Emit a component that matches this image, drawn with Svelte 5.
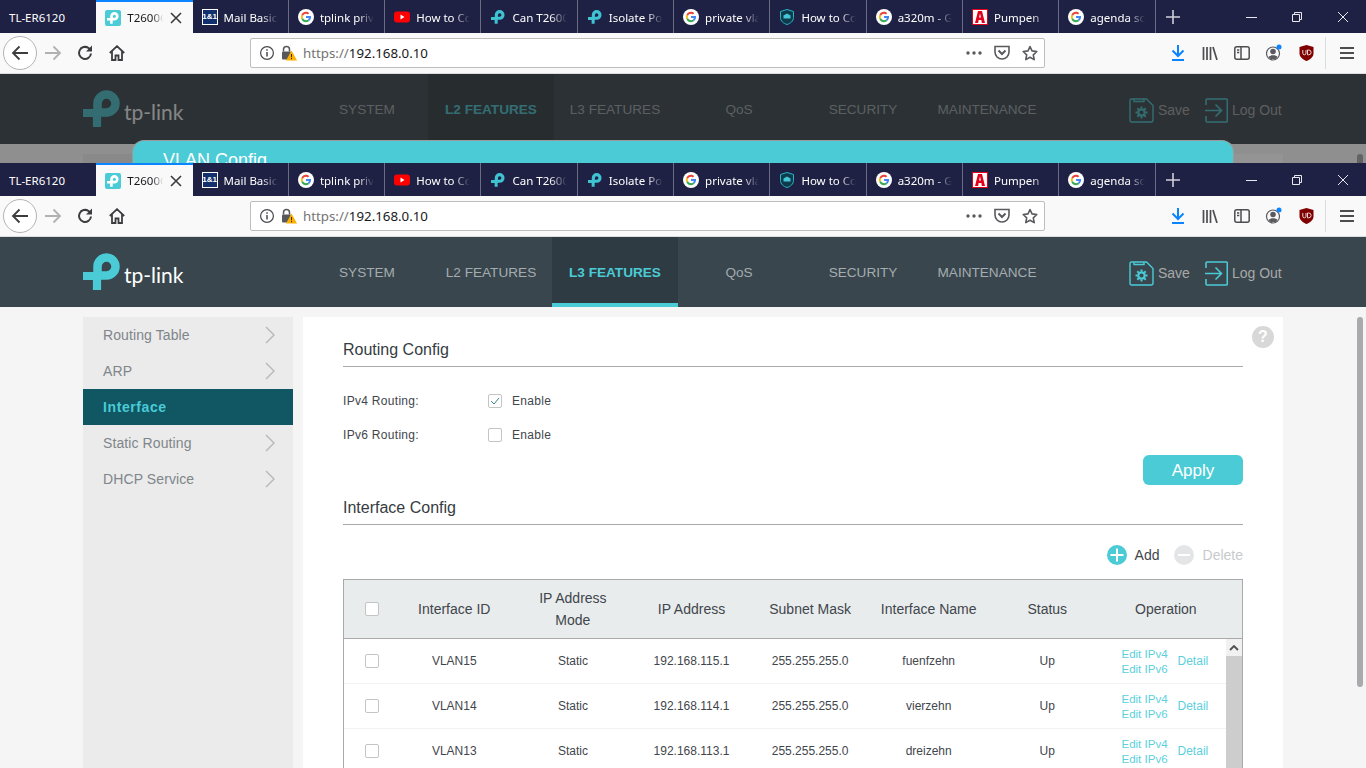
<script>
	const tabs = [
		{ title: 'TL-ER6120', icon: '' },
		{ title: 'T2600G-28TS', icon: 'tpbox', active: true },
		{ title: 'Mail Basic', icon: 'ionos' },
		{ title: 'tplink private', icon: 'google' },
		{ title: 'How to Config', icon: 'youtube' },
		{ title: 'Can T2600G', icon: 'tp' },
		{ title: 'Isolate Ports', icon: 'tp' },
		{ title: 'private vlan', icon: 'google' },
		{ title: 'How to Config', icon: 'shield' },
		{ title: 'a320m - Google', icon: 'google' },
		{ title: 'Pumpen', icon: 'red' },
		{ title: 'agenda sonntag', icon: 'google' }
	];

	const nav = ['SYSTEM', 'L2 FEATURES', 'L3 FEATURES', 'QoS', 'SECURITY', 'MAINTENANCE'];
	const side = ['Routing Table', 'ARP', 'Interface', 'Static Routing', 'DHCP Service'];
	const columns = ['Interface ID', 'IP Address\nMode', 'IP Address', 'Subnet Mask', 'Interface Name', 'Status', 'Operation'];
	const rows = [
		{ id: 'VLAN15', ip: '192.168.115.1', name: 'fuenfzehn' },
		{ id: 'VLAN14', ip: '192.168.114.1', name: 'vierzehn' },
		{ id: 'VLAN13', ip: '192.168.113.1', name: 'dreizehn' }
	];
</script>

{#snippet tpMark(color, size)}
	<svg width={size} height={size} viewBox="0 0 38 38" fill="none" stroke={color}>
		<path d="M14.500 22V13.500A9 9 0 1 1 23.500 22.500H14" stroke-width="8.500" />
		<path d="M0 23H18M14 19V37" stroke-width="8.200" />
	</svg>
{/snippet}

{#snippet favicon(kind)}
	{#if kind === 'tpbox'}
		<span class="fav tpbox">{@render tpMark('#fff', 12)}</span>
	{:else if kind === 'tp'}
		<span class="fav">{@render tpMark('#3fc3d2', 14)}</span>
	{:else if kind === 'ionos'}
		<span class="fav ionos">1&amp;1</span>
	{:else if kind === 'google'}
		<svg class="fav" width="16" height="16" viewBox="0 0 24 24">
			<circle cx="12" cy="12" r="12" fill="#fff" />
			<g transform="translate(3.600 3.600) scale(.7)">
				<path fill="#ea4335" d="M12 5.040c1.900 0 3.200.8 3.900 1.500l2.900-2.800C17.100 2.100 14.800 1 12 1 7.700 1 4 3.500 2.200 7.100l3.300 2.600C6.400 7 9 5.040 12 5.040z" />
				<path fill="#4285f4" d="M22.800 12.200c0-.9-.1-1.600-.2-2.300H12v4.200h6.200c-.1 1-.8 2.600-2.300 3.600l3.200 2.500c2.300-2.100 3.700-5.300 3.700-8z" />
				<path fill="#fbbc05" d="M5.500 14.300c-.2-.7-.4-1.500-.4-2.300s.1-1.600.4-2.300L2.200 7.100C1.500 8.600 1 10.200 1 12s.4 3.400 1.200 4.900l3.300-2.600z" />
				<path fill="#34a853" d="M12 23c3 0 5.500-1 7.200-2.700l-3.200-2.500c-.9.6-2.100 1-3.900 1-3 0-5.600-2-6.500-4.700l-3.300 2.600C4 20.500 7.700 23 12 23z" />
			</g>
		</svg>
	{:else if kind === 'youtube'}
		<svg class="fav" width="16" height="16" viewBox="0 0 16 16">
			<rect y="2.500" width="16" height="11" rx="3" fill="#f00" />
			<path d="M6.500 5.500v5l4-2.500z" fill="#fff" />
		</svg>
	{:else if kind === 'shield'}
		<svg class="fav" width="16" height="16" viewBox="0 0 16 16">
			<path d="M8 .5l6.500 2v6c0 3.500-3 6-6.500 7-3.500-1-6.500-3.500-6.500-7v-6z" fill="#0f3a4a" stroke="#26b6c9" />
			<path d="M4.500 6.500L8 4.500l3.500 2v3h-7z" fill="#45c6d6" />
		</svg>
	{:else if kind === 'red'}
		<span class="fav redbox">
			<svg width="10" height="12" viewBox="0 0 10 12"><path d="M0 12L3 0h4l3 12H6.800l-.4-3H3.600l-.4 3zM4 6.500h2L5 2.500z" fill="#e2001a" /></svg>
		</span>
	{/if}
{/snippet}

{#snippet chrome()}
	<div class="tabstrip">
		{#each tabs as tab}
			<div class="tab" class:active={tab.active}>
				{#if tab.icon}{@render favicon(tab.icon)}{/if}
				<span class="tab-title" class:plain={!tab.icon}>{tab.title}</span>
				{#if tab.active}
					<svg class="tab-close" width="12" height="12" viewBox="0 0 12 12" stroke="#3b3b3f" stroke-width="1.600"><path d="M1 1l10 10M11 1L1 11" /></svg>
				{/if}
			</div>
		{/each}
		<div class="newtab">
			<svg width="14" height="14" viewBox="0 0 14 14" stroke="#cfd0da" stroke-width="1.600"><path d="M7 0v14M0 7h14" /></svg>
		</div>
		<div class="winctl">
			<svg width="12" height="12" viewBox="0 0 12 12" stroke="#e8e8ee"><path d="M1 6.500h11" /></svg>
			<svg width="12" height="12" viewBox="0 0 12 12" fill="none" stroke="#e8e8ee"><path d="M1.500 3.500h7v7h-7zM3.500 3.500v-2h7v7h-2" /></svg>
			<svg width="12" height="12" viewBox="0 0 12 12" stroke="#e8e8ee"><path d="M1 1l10 10M11 1L1 11" /></svg>
		</div>
	</div>
	<div class="toolbar">
		<div class="back">
			<svg width="18" height="16" viewBox="0 0 18 16" fill="none" stroke="#3d3d40" stroke-width="1.800"><path d="M17 8H2M8.500 1.500L2 8l6.500 6.500" /></svg>
		</div>
		<div class="tool">
			<svg width="17" height="16" viewBox="0 0 17 16" fill="none" stroke="#b1b1b3" stroke-width="1.800"><path d="M0 8h15M8.500 1.500L15 8l-6.500 6.500" /></svg>
		</div>
		<div class="tool">
			<svg width="16" height="16" viewBox="0 0 16 16" fill="none" stroke="#3d3d40" stroke-width="2"><path d="M14 8.500A6 6 0 1 1 11.500 3L14 5" /><path d="M15 .5v6H9z" fill="#3d3d40" stroke="none" /></svg>
		</div>
		<div class="tool">
			<svg width="16" height="16" viewBox="0 0 16 16" fill="none" stroke="#3d3d40" stroke-width="1.800"><path d="M.8 8L8 1.200 15.200 8M3 6.500V15h3.500v-4.500h3V15H13V6.500" /></svg>
		</div>
		<div class="urlbar">
			<svg class="u-info" width="16" height="16" viewBox="0 0 16 16" fill="none" stroke="#4a4a4f" stroke-width="1.200"><circle cx="8" cy="8" r="6.400" /><path d="M8 7v4.500M8 4.200v1.600" stroke-width="1.500" /></svg>
			<svg class="u-lock" width="16" height="16" viewBox="0 0 16 16">
				<path d="M2.500 6.500V4.500a3 3 0 0 1 6 0v2" fill="none" stroke="#58585c" stroke-width="1.500" />
				<rect x="1" y="6.500" width="9" height="8" rx="1" fill="#58585c" />
				<path d="M10.500 5.500L16 15.500H5z" fill="#fcb000" />
				<path d="M10.500 9v3.200M10.500 13v1.200" stroke="#3a2a00" />
			</svg>
			<span class="url"><span class="scheme">https://</span>192.168.0.10</span>
			<svg class="u-dots" width="16" height="4" viewBox="0 0 16 4" fill="#5a5a5e"><circle cx="2" cy="2" r="1.700" /><circle cx="8" cy="2" r="1.700" /><circle cx="14" cy="2" r="1.700" /></svg>
			<svg class="u-pocket" width="16" height="15" viewBox="0 0 16 15" fill="none" stroke="#5a5a5e" stroke-width="1.600"><path d="M1 1.500h14v5.500a7 7 0 0 1-14 0z" /><path d="M4.500 5.500L8 9l3.500-3.500" stroke-width="2" /></svg>
			<svg class="u-star" width="16" height="16" viewBox="0 0 16 16" fill="none" stroke="#5a5a5e" stroke-width="1.600"><path d="M8 1.500l2 4.400 4.800.6-3.500 3.300.9 4.800L8 12.200l-4.200 2.400.9-4.800L1.200 6.500 6 5.900z" stroke-linejoin="round" /></svg>
		</div>
		<div class="tools-right">
			<div class="tool">
				<svg width="14" height="16" viewBox="0 0 14 16" fill="none" stroke="#0a84ff" stroke-width="2"><path d="M7 0v10.500M1.500 5.500L7 11l5.500-5.500M1 15h12" /></svg>
			</div>
			<div class="tool">
				<svg width="16" height="14" viewBox="0 0 16 14" fill="none" stroke="#4d4d50" stroke-width="1.700"><path d="M1.500 1v13M5 1v13M8.500 1v13M11 1l4 13" /></svg>
			</div>
			<div class="tool">
				<svg width="16" height="14" viewBox="0 0 16 14" fill="none" stroke="#4d4d50" stroke-width="1.500"><rect x=".8" y=".8" width="14.400" height="12.400" rx="2" /><path d="M7 1v12M3 4h2.300M3 6.500h2.300" /></svg>
			</div>
			<div class="tool">
				<svg width="18" height="18" viewBox="0 0 18 18" fill="none"><circle cx="8" cy="9.500" r="6.500" stroke="#5a5a5e" stroke-width="1.200" /><circle cx="8" cy="7.500" r="2.800" fill="#5a5a5e" /><path d="M3.500 13c1-2.200 8-2.200 9 0l-2 2h-5z" fill="#5a5a5e" /><circle cx="14" cy="3" r="2.500" fill="#0a84ff" /></svg>
			</div>
			<div class="tool">
				<svg width="15" height="16" viewBox="0 0 15 16"><path d="M7.500 0l7 2v6.500c0 3.500-3.500 6-7 7.500-3.500-1.500-7-4-7-7.500V2z" fill="#800000" /><path d="M3.800 5v3.200a1.600 1.600 0 0 0 3.200 0V5M8.500 5v4.800h1.200a2.400 2.400 0 0 0 0-4.800z" fill="none" stroke="#e8d4d4" /></svg>
			</div>
			<span class="tool-sep"></span>
			<div class="tool menu">
				<svg width="14" height="12" viewBox="0 0 14 12" stroke="#4d4d50" stroke-width="1.800"><path d="M0 1h14M0 6h14M0 11h14" /></svg>
			</div>
		</div>
	</div>
{/snippet}

{#snippet header(activeIndex)}
	<header class="head">
		<div class="logo">
			{@render tpMark('#4acbd6', 38)}
			<span class="wordmark">tp-link</span>
		</div>
		<nav class="nav">
			{#each nav as item, i}
				<div class="nav-item" class:on={i === activeIndex}>{item}</div>
			{/each}
		</nav>
		<div class="head-actions">
			<svg width="25" height="25" viewBox="0 0 25 25" fill="none" stroke="#4acbd6" stroke-width="1.400">
				<path d="M2.500 1h15L24 7.500V22a2 2 0 0 1-2 2H2.500a1.500 1.500 0 0 1-1.500-1.500v-20A1.500 1.500 0 0 1 2.500 1zM5 1v2.500h10V1" />
				<circle cx="12.500" cy="14.500" r="3.200" stroke-width="2.200" />
				<path d="M12.500 8.500v2M12.500 18.500v2M6.500 14.500h2M16.500 14.500h2M8.300 10.300l1.400 1.400M15.300 17.300l1.400 1.400M16.700 10.300l-1.400 1.400M9.700 17.300l-1.400 1.400" stroke-width="2" />
			</svg>
			<span>Save</span>
			<svg class="logout" width="23" height="25" viewBox="0 0 23 25" fill="none" stroke="#4acbd6" stroke-width="1.600">
				<path d="M1 7V2a1 1 0 0 1 1-1h19.500a.8.800 0 0 1 .8.8v21.400a.8.800 0 0 1-.8.800H2a1 1 0 0 1-1-1v-5" />
				<path d="M0 12.500h15.500M10.500 6.500l6 6-6 6" />
			</svg>
			<span>Log Out</span>
		</div>
	</header>
{/snippet}

{#snippet checkbox(checked)}
	<span class="check">
		{#if checked}
			<svg width="10" height="8" viewBox="0 0 10 8" fill="none" stroke="#3f7f8c"><path d="M1 4l3 3 5-6" /></svg>
		{/if}
	</span>
{/snippet}

<div class="screen">
	<section class="window behind">
		{@render chrome()}
		<div class="stage">
			<div class="head-dim">{@render header(1)}</div>
			<div class="dim-page">
				<div class="dim-side"></div>
				<div class="dim-main"></div>
			</div>
			<span class="dim-scroll"></span>
			<div class="modal">
				<div class="modal-title">VLAN Config</div>
			</div>
		</div>
	</section>

	<section class="window front">
		{@render chrome()}
		{@render header(2)}
		<div class="page">
			<aside class="side">
				{#each side as item}
					<div class="side-item" class:current={item === 'Interface'}>
						<span>{item}</span>
						{#if item !== 'Interface'}
							<svg width="10" height="18" viewBox="0 0 10 18" fill="none" stroke="#b9b9b9" stroke-width="1.500"><path d="M1 1l8 8-8 8" /></svg>
						{/if}
					</div>
				{/each}
			</aside>
			<main class="main">
				<span class="help">?</span>
				<h2>Routing Config</h2>
				<div class="form">
					<div class="form-row">
						<span class="form-label">IPv4 Routing:</span>
						{@render checkbox(true)}
						<span>Enable</span>
					</div>
					<div class="form-row">
						<span class="form-label">IPv6 Routing:</span>
						{@render checkbox(false)}
						<span>Enable</span>
					</div>
				</div>
				<div class="apply-row"><button class="apply">Apply</button></div>
				<h2 class="second">Interface Config</h2>
				<div class="table-tools">
					<svg width="20" height="20" viewBox="0 0 20 20"><circle cx="10" cy="10" r="10" fill="#4acbd6" /><path d="M10 3.500v13M3.500 10h13" stroke="#fff" stroke-width="2" /></svg>
					<span class="add">Add</span>
					<svg class="del-icon" width="20" height="20" viewBox="0 0 20 20"><circle cx="10" cy="10" r="10" fill="#e4e5e7" /><path d="M4 10h12" stroke="#fff" stroke-width="2" /></svg>
					<span class="del">Delete</span>
				</div>
				<div class="table">
					<div class="thead">
						<div class="cell pick">{@render checkbox(false)}</div>
						{#each columns as col}
							<div class="cell">{col}</div>
						{/each}
					</div>
					<div class="tbody">
						<div class="rows">
							{#each rows as row}
								<div class="row">
									<div class="cell pick">{@render checkbox(false)}</div>
									<div class="cell">{row.id}</div>
									<div class="cell">Static</div>
									<div class="cell">{row.ip}</div>
									<div class="cell">255.255.255.0</div>
									<div class="cell">{row.name}</div>
									<div class="cell">Up</div>
									<div class="cell ops">
										<div class="edit"><span>Edit IPv4</span><span>Edit IPv6</span></div>
										<span>Detail</span>
									</div>
								</div>
							{/each}
						</div>
						<div class="tscroll">
							<div class="tscroll-up">
								<svg width="10" height="6" viewBox="0 0 10 6" fill="none" stroke="#505050" stroke-width="1.800"><path d="M1 5l4-4 4 4" /></svg>
							</div>
						</div>
					</div>
				</div>
			</main>
			<span class="page-scroll"></span>
		</div>
	</section>
</div>

<style>
	:global(body) {
		margin: 0;
		background: #f5f5f5;
	}

	.screen {
		width: 1366px;
		height: 768px;
		overflow: hidden;
		font-family: "Liberation Sans", Arial, sans-serif;
	}

	.window.behind {
		height: 163px;
		overflow: hidden;
	}

	.window.front {
		height: 605px;
		overflow: hidden;
	}

	/* browser chrome */
	.tabstrip {
		display: flex;
		height: 33px;
		background: #1f2144;
		font-family: "Noto Sans", "Open Sans", sans-serif;
		font-size: 11.5px;
		color: #fff;
	}

	.tab {
		display: flex;
		align-items: center;
		box-sizing: border-box;
		width: 96.3px;
		padding-left: 9px;
		gap: 6px;
		border-right: 1px solid #6a6c85;
		flex-shrink: 0;
		min-width: 0;
	}

	.tab:first-child,
	.tab.active {
		border-right: 0;
	}

	.tab.active {
		position: relative;
		background: #f9f9fa;
		border-top: 2px solid #0a84ff;
		color: #18191a;
	}

	.tab-title {
		flex: 1;
		min-width: 0;
		overflow: hidden;
		white-space: nowrap;
		padding-top: 2px;
		mask-image: linear-gradient(to right, #000 68%, transparent 98%);
		-webkit-mask-image: linear-gradient(to right, #000 68%, transparent 98%);
		margin-right: 9px;
	}

	.tab-title.plain {
		mask-image: none;
		-webkit-mask-image: none;
	}

	.tab.active .tab-title {
		margin-right: 0;
		padding-top: 0;
	}

	.tab-close {
		margin-right: 11px;
		flex-shrink: 0;
	}

	.fav {
		flex-shrink: 0;
		width: 16px;
		height: 16px;
		display: flex;
		align-items: center;
		justify-content: center;
	}

	.tpbox {
		background: #4acbd6;
		border-radius: 2px;
	}

	.ionos {
		box-sizing: border-box;
		background: #11306d;
		border: 1px solid #fff;
		color: #fff;
		font-size: 8px;
		font-weight: 700;
		font-family: "Liberation Sans", sans-serif;
	}

	.redbox {
		box-sizing: border-box;
		background: #fff;
		border: 1px solid #e2001a;
	}

	.newtab {
		width: 34px;
		display: flex;
		align-items: center;
		justify-content: center;
	}

	.winctl {
		margin-left: auto;
		display: flex;
		align-items: center;
		gap: 34px;
		padding-right: 17px;
	}

	.toolbar {
		display: flex;
		align-items: center;
		box-sizing: border-box;
		height: 41px;
		padding: 0 0 1px 3px;
		background: #f9f9fa;
		border-bottom: 1px solid #dcdcde;
	}

	.back {
		box-sizing: border-box;
		width: 34px;
		height: 34px;
		border: 1px solid #b4b4b6;
		border-radius: 50%;
		background: #fff;
		display: flex;
		align-items: center;
		justify-content: center;
	}

	.tool {
		width: 32px;
		height: 32px;
		display: flex;
		align-items: center;
		justify-content: center;
	}

	.urlbar {
		display: flex;
		align-items: center;
		box-sizing: border-box;
		width: 795px;
		height: 30px;
		margin-left: 117px;
		padding: 0 6px 0 8px;
		background: #fff;
		border: 1px solid #bdbdbd;
		border-radius: 2px;
	}

	.u-lock {
		margin-left: 6px;
	}

	.url {
		margin-left: 6px;
		font-family: "Noto Sans", "Open Sans", sans-serif;
		font-size: 13.3px;
		color: #18181a;
	}

	.scheme {
		color: #737373;
	}

	.u-dots {
		margin-left: auto;
	}

	.u-pocket {
		margin-left: 12px;
	}

	.u-star {
		margin-left: 12px;
	}

	.tools-right {
		display: flex;
		align-items: center;
		margin-left: 117px;
	}

	.tool-sep {
		width: 1px;
		height: 32px;
		margin-left: 3px;
		background: #dcdcde;
	}

	.tool.menu {
		margin-left: 5px;
	}

	/* router page */
	.head {
		display: flex;
		height: 70px;
		background: #39464d;
		color: #a4acb0;
		font-size: 14px;
	}

	.logo {
		display: flex;
		align-items: center;
		box-sizing: border-box;
		width: 305px;
		padding-left: 83px;
		gap: 3px;
	}

	.wordmark {
		font-family: "Lato", "Open Sans", sans-serif;
		font-size: 21px;
		color: #fff;
		margin-top: 5px;
	}

	.nav {
		display: flex;
	}

	.nav-item {
		box-sizing: border-box;
		width: 124px;
		height: 70px;
		display: flex;
		align-items: center;
		justify-content: center;
		white-space: nowrap;
		font-size: 13.6px;
		border-bottom: 4px solid transparent;
		padding-top: 4px;
	}

	.nav-item.on {
		width: 126px;
		margin: 0 -1px;
		background: #2f3b42;
		border-bottom-color: #4acbd6;
		color: #4acbd6;
		font-weight: 700;
	}

	.head-actions {
		margin-left: 80px;
		display: flex;
		align-items: center;
		gap: 4px;
		padding-top: 2px;
		color: #a9a9a9;
	}

	.logout {
		margin-left: 11px;
	}

	.stage {
		position: relative;
	}

	.head-dim {
		position: relative;
	}

	.head-dim::after {
		content: "";
		position: absolute;
		inset: 0;
		background: rgba(32, 32, 32, 0.55);
	}

	.dim-page {
		display: flex;
		gap: 10px;
		height: 30px;
		padding: 10px 0 0 83px;
		background: #8f8f8f;
	}

	.dim-side {
		width: 210px;
		background: #898989;
	}

	.dim-main {
		width: 980px;
		background: #949494;
	}

	.dim-scroll {
		position: absolute;
		left: 1357px;
		top: 80px;
		width: 6px;
		height: 30px;
		border-radius: 3px;
		background: #636365;
	}

	.modal {
		position: absolute;
		left: 132px;
		top: 66px;
		box-sizing: border-box;
		width: 1102px;
		height: 40px;
		background: #4acbd6;
		border: 1px solid #9a9a9a;
		border-bottom: 0;
		border-radius: 12px 12px 0 0;
	}

	.modal-title {
		padding: 7px 0 0 30px;
		font-size: 18px;
		line-height: 24px;
		color: #fff;
	}

	.page {
		position: relative;
		display: flex;
		gap: 10px;
		padding: 10px 0 0 83px;
		background: #f5f5f5;
		min-height: 600px;
	}

	.side {
		width: 210px;
		background: #ebebeb;
		flex-shrink: 0;
	}

	.side-item {
		display: flex;
		align-items: center;
		justify-content: space-between;
		height: 36px;
		padding: 0 18px 0 20px;
		font-size: 14px;
		letter-spacing: 0.1px;
		color: #80858a;
	}

	.side-item.current {
		background: #105663;
		color: #4acbd6;
		font-weight: 700;
		letter-spacing: 0.6px;
	}

	.main {
		position: relative;
		box-sizing: border-box;
		width: 980px;
		padding: 20px 40px 0;
		background: #fff;
		color: #3f464c;
		font-size: 12px;
	}

	h2 {
		margin: 0;
		height: 29px;
		font-size: 16px;
		font-weight: 400;
		line-height: 26px;
		color: #363c42;
		border-bottom: 1px solid #a9a9a9;
	}

	h2.second {
		margin-top: 10px;
	}

	.help {
		position: absolute;
		right: 9px;
		top: 9px;
		width: 22px;
		height: 22px;
		border-radius: 50%;
		background: #d8d8d8;
		color: #fff;
		font-size: 16px;
		font-weight: 700;
		line-height: 22px;
		text-align: center;
	}

	.form {
		margin-top: 16px;
	}

	.form-row {
		box-sizing: border-box;
		display: flex;
		align-items: center;
		height: 34px;
		padding-top: 2px;
		gap: 10px;
		letter-spacing: 0.3px;
	}

	.form-label {
		width: 135px;
	}

	.check {
		box-sizing: border-box;
		width: 14px;
		height: 14px;
		border: 1px solid #c4c4c4;
		border-radius: 2px;
		background: #fff;
		display: inline-flex;
		align-items: center;
		justify-content: center;
	}

	.apply-row {
		display: flex;
		justify-content: flex-end;
		margin-top: 4px;
	}

	.apply {
		width: 100px;
		height: 30px;
		padding: 2px 0 0;
		border: 0;
		border-radius: 6px;
		background: #4acbd6;
		color: #fff;
		font-family: inherit;
		font-size: 17px;
	}

	.table-tools {
		display: flex;
		align-items: center;
		justify-content: flex-end;
		height: 20px;
		margin-top: 20px;
		font-size: 14px;
	}

	.add {
		margin-left: 8px;
		color: #3f464c;
	}

	.del-icon {
		margin-left: 14px;
	}

	.del {
		margin-left: 9px;
		color: #c8cacc;
	}

	.table {
		margin-top: 14px;
		border: 1px solid #a9a9a9;
		border-bottom: 0;
	}

	.thead,
	.row {
		display: grid;
		grid-template-columns: 51px repeat(7, 118.6px);
	}

	.thead {
		height: 58px;
		background: #e9ecec;
		border-bottom: 1px solid #a9a9a9;
		font-size: 14px;
		line-height: 22px;
		white-space: pre-line;
	}

	.cell {
		display: flex;
		align-items: center;
		justify-content: center;
		text-align: center;
	}

	.cell.pick {
		justify-content: flex-start;
		padding-left: 21px;
	}

	.tbody {
		display: flex;
	}

	.rows {
		width: 882px;
	}

	.row {
		box-sizing: border-box;
		height: 45px;
		padding-bottom: 2px;
		box-shadow: inset 0 -1px 0 #f1f2f2;
	}

	.ops {
		gap: 10px;
		padding-right: 2px;
		color: #5bd0dc;
		white-space: nowrap;
	}

	.edit {
		display: flex;
		flex-direction: column;
		padding-top: 2px;
		font-size: 11.5px;
		line-height: 15px;
	}

	.tscroll {
		width: 16px;
		background: #cdcdcd;
	}

	.tscroll-up {
		height: 17px;
		background: #f1f1f1;
		display: flex;
		align-items: center;
		justify-content: center;
	}

	.page-scroll {
		position: absolute;
		left: 1357px;
		top: 10px;
		width: 6px;
		height: 370px;
		border-radius: 3px;
		background: #a9a9ae;
	}
</style>
